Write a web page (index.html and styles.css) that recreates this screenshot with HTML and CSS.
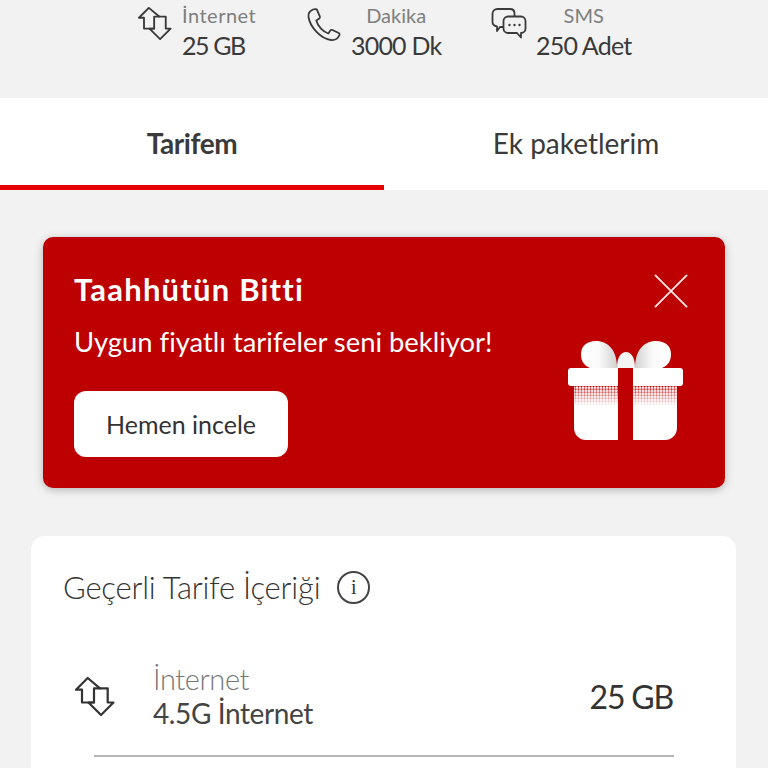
FILE: index.html
```html
<!DOCTYPE html>
<html lang="tr">
<head>
<meta charset="utf-8">
<title>Tarifem</title>
<link rel="stylesheet" href="styles.css">
</head>
<body>
<svg class="defs" width="0" height="0" aria-hidden="true">
  <symbol id="updown" viewBox="0 0 40 39">
    <path d="M19 25.500H7V12.700H1L12.700 1 25 11.300" fill="none" stroke="currentColor" stroke-width="2.200" stroke-linejoin="round" stroke-linecap="round"/>
    <path d="M19 11.300H32.700V25.500H38.500L26 38 13.500 25.500H19Z" fill="none" stroke="currentColor" stroke-width="2.200" stroke-linejoin="round"/>
  </symbol>
</svg>
<header class="summary">
  <div class="stat stat-net">
    <svg class="stat-icon stat-icon-net"><use href="#updown"/></svg>
    <div class="stat-text stat-text-left"><span class="stat-label">İnternet</span><span class="stat-value stat-value-net">25 GB</span></div>
  </div>
  <div class="stat stat-min">
    <svg class="stat-icon" viewBox="0 0 36 36"><path d="M7 2.500C3.500 4 2 6.500 2.500 10 4 20 15 32 25 33c3.500.3 7-1.500 8.500-5 .3-1 0-1.500-.8-2l-6.200-3c-1-.4-1.700-.2-2.200.5l-2 3c-5-1.500-10.500-7-12-13l3-2c.7-.5.900-1.200.5-2.200l-3-7C10 2.300 8.500 2 7 2.500z" fill="none" stroke="currentColor" stroke-width="1.800" stroke-linejoin="round"/></svg>
    <div class="stat-text"><span class="stat-label">Dakika</span><span class="stat-value">3000 Dk</span></div>
  </div>
  <div class="stat stat-sms">
    <svg class="stat-icon" viewBox="0 0 36 36"><path d="M12 20H9l-3 4v-4.500C3.500 19 1.500 17.500 1.500 15V7C1.500 4 3.500 2 6.500 2h12.500c3 0 4.500 2 4.500 4.500V9" fill="none" stroke="currentColor" stroke-width="1.800" stroke-linejoin="round" stroke-linecap="round"/><path d="M17 9.500h13c2.500 0 4.500 2 4.500 4.500v7.500c0 2.500-2 4.500-4.500 4.500v4.500L26 26h-9c-2.500 0-4.500-2-4.500-4.500V14c0-2.500 2-4.500 4.500-4.500z" fill="none" stroke="currentColor" stroke-width="1.800" stroke-linejoin="round"/><circle cx="18.500" cy="18" r="1.200" fill="currentColor"/><circle cx="23.500" cy="18" r="1.200" fill="currentColor"/><circle cx="28.500" cy="18" r="1.200" fill="currentColor"/></svg>
    <div class="stat-text"><span class="stat-label">SMS</span><span class="stat-value">250 Adet</span></div>
  </div>
</header>
<nav class="tabs">
  <div class="tab tab-active">Tarifem</div>
  <div class="tab">Ek paketlerim</div>
</nav>
<main class="content">
  <section class="promo">
    <div class="promo-body">
      <h2 class="promo-title">Taahhütün Bitti</h2>
      <p class="promo-text">Uygun fiyatlı tarifeler seni bekliyor!</p>
      <div class="promo-button">Hemen incele</div>
    </div>
    <svg class="promo-close" viewBox="0 0 36 36"><path d="M1.500 1.500l33 33M34.500 1.500l-33 33" stroke="#fbe4e4" stroke-width="2" stroke-linecap="round"/></svg>
    <svg class="promo-gift" viewBox="0 0 116 102">
      <defs>
        <pattern id="dots" width="3" height="3" patternUnits="userSpaceOnUse"><circle cx="1.500" cy="1.500" r="1.150" fill="#bd0000"/></pattern>
        <linearGradient id="fade" x1="0" y1="0" x2="0" y2="1"><stop offset="0" stop-color="#fff" stop-opacity=".95"/><stop offset="1" stop-color="#fff" stop-opacity="0"/></linearGradient>
        <mask id="fademask"><rect x="0" y="46" width="116" height="20" fill="url(#fade)"/></mask>
        <linearGradient id="bowl" x1="0" y1="0" x2="1" y2="0"><stop offset="0" stop-color="#fff"/><stop offset=".5" stop-color="#fafafa"/><stop offset="1" stop-color="#d2d2d2"/></linearGradient>
        <linearGradient id="bowr" x1="0" y1="0" x2="1" y2="0"><stop offset="0" stop-color="#d2d2d2"/><stop offset=".5" stop-color="#fafafa"/><stop offset="1" stop-color="#fff"/></linearGradient>
      </defs>
      <path d="M22 28C15 25 13 20 13 14 13 6 19 1 28 1c12 0 21 9 21 27z" fill="url(#bowl)"/>
      <path d="M94 28c7-3 9-8 9-14 0-8-6-13-15-13-12 0-21 9-21 27z" fill="url(#bowr)"/>
      <path d="M49 28c0-11 4-16 9-16s9 5 9 16z" fill="#f4f4f4"/>
      <rect x="0" y="28" width="115" height="18" rx="3" fill="#fff"/>
      <path d="M6 46h103v42a12 12 0 0 1-12 12H18A12 12 0 0 1 6 88z" fill="#fff"/>
      <rect x="6" y="46" width="103" height="20" fill="url(#dots)" mask="url(#fademask)"/>
      <rect x="50" y="28" width="15" height="72" fill="#bd0000"/>
    </svg>
  </section>
  <section class="card">
    <div class="card-head">
      <h3 class="card-title">Geçerli Tarife İçeriği</h3>
      <span class="info">i</span>
    </div>
    <div class="row">
      <svg class="row-icon"><use href="#updown"/></svg>
      <div class="row-text"><span class="row-label">İnternet</span><span class="row-name">4.5G İnternet</span></div>
      <span class="row-value">25 GB</span>
    </div>
    <hr class="row-rule">
  </section>
</main>
</body>
</html>
```
FILE: styles.css
```css
* { box-sizing: border-box; }
html, body { height: 768px; overflow: hidden; }
body { margin: 0; background: #f2f2f2; color: #333; font-family: "Lato", "Open Sans", sans-serif; }
.defs { position: absolute; }
.summary { height: 98px; display: flex; padding: 1px 0 0 137px; }
.stat { display: flex; align-items: flex-start; height: 64px; }
.stat-net { width: 169px; }
.stat-min { width: 185px; }
.stat-icon { width: 36px; height: 36px; margin-top: 6px; color: #3a3a3a; flex: none; }
.stat-icon-net { width: 34px; height: 33px; margin-left: 1px; margin-right: 1px; }
.stat-text { display: flex; flex-direction: column; align-items: center; margin-left: 9px; }
.stat-text-left { align-items: flex-start; }
.stat-label { font-size: 20px; line-height: 28px; color: #7e7e7e; }
.stat-text-left .stat-label { letter-spacing: .5px; }
.stat-value { font-size: 25px; line-height: 32px; color: #3a3a3a; letter-spacing: -.8px; }
.stat-value-net { letter-spacing: -1.4px; }
.tabs { display: flex; height: 92px; background: #fff; }
.tab { flex: 1; display: flex; align-items: center; justify-content: center; padding-bottom: 2px; font-size: 28px; color: #3a3a3a; }
.tab-active { font-weight: 700; letter-spacing: -.4px; border-bottom: 5px solid #e60000; padding-top: 3px; padding-bottom: 0; }
.content { padding: 47px 32px 0 31px; }
.promo { position: relative; margin: 0 11px 0 12px; height: 251px; background: #bd0000; border-radius: 10px; box-shadow: 0 2px 8px rgba(0,0,0,.25); color: #fff; padding: 32px 31px; }
.promo-title { margin: 0; font-size: 31px; line-height: 40px; font-weight: 700; letter-spacing: 1.2px; }
.promo-text { margin: 15px 0 0; font-size: 27.4px; line-height: 36px; }
.promo-button { display: flex; align-items: center; justify-content: center; width: 214px; height: 66px; margin-top: 31px; background: #fff; border-radius: 12px; color: #333; font-size: 25px; }
.promo-close { position: absolute; right: 37px; top: 37px; width: 34px; height: 34px; }
.promo-gift { position: absolute; left: 525px; top: 103px; width: 116px; height: 102px; }
.card { margin-top: 48px; height: 232px; background: #fff; border-radius: 14px 14px 0 0; padding: 27px 32px 0; }
.card-head { display: flex; align-items: center; height: 48px; }
.card-title { margin: 0; font-size: 31px; font-weight: 300; color: #333; letter-spacing: -.2px; }
.info { width: 33px; height: 33px; margin-left: 17px; border: 2px solid #444; border-radius: 50%; display: flex; align-items: center; justify-content: center; font-family: "Liberation Serif", serif; font-size: 20px; }
.row { display: flex; align-items: center; margin-top: 26px; padding: 0 31px 0 12px; height: 118px; }
.row-icon { width: 40px; height: 39px; color: #333; flex: none; }
.row-text { display: flex; flex-direction: column; margin-left: 38px; flex: 1; }
.row-label { font-size: 29px; line-height: 35px; font-weight: 300; color: #777; letter-spacing: -.4px; }
.row-name { font-size: 28px; line-height: 35px; color: #444; letter-spacing: -.4px; }
.row-value { font-size: 32px; color: #333; letter-spacing: -1.2px; }
.row-rule { margin: 0 30px 0 31px; border: 0; border-top: 2px solid #b5b5b5; }
```
